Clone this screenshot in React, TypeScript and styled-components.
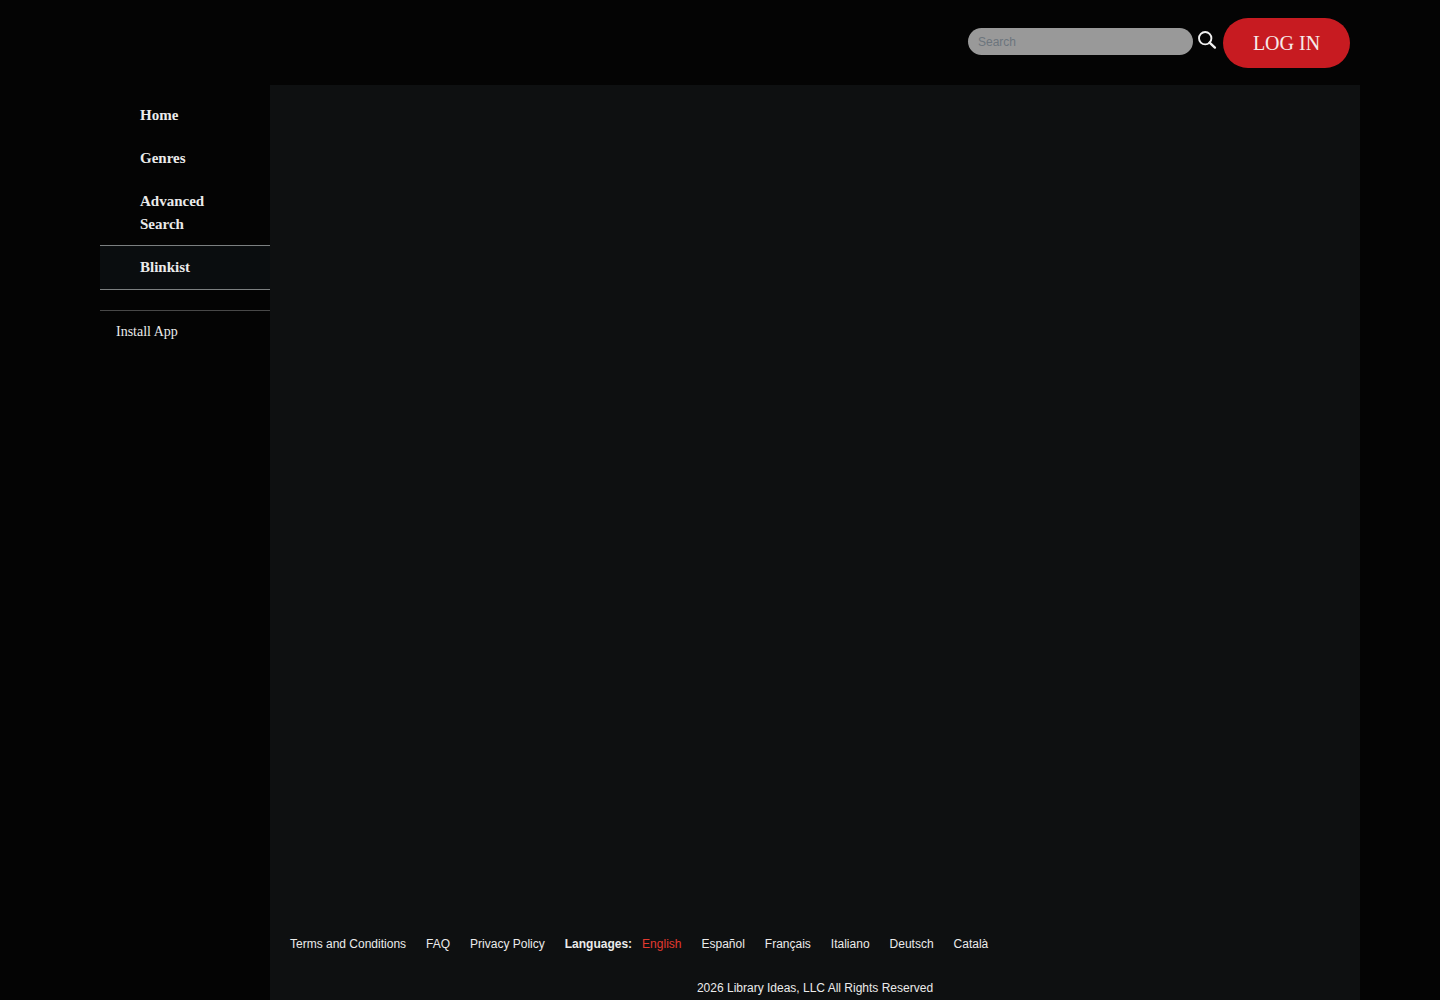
import React from "react";
import styled, { createGlobalStyle } from "styled-components";

const serif = `"Liberation Serif", "Times New Roman", serif`;
const sans = `"Liberation Sans", Arial, sans-serif`;

const GlobalStyle = createGlobalStyle`
  *, *::before, *::after { box-sizing: border-box; }
  body { margin: 0; background: #040404; color: #ebebeb; font-family: ${serif}; }
  a { color: inherit; text-decoration: none; }
  ul { list-style: none; margin: 0; padding: 0; }
`;

const Page = styled.div`
  min-height: 100vh;
  display: flex;
  flex-direction: column;
  padding: 0 80px 0 100px;
`;

const Header = styled.header`
  height: 85px;
  display: flex;
  justify-content: flex-end;
  align-items: flex-start;
  padding: 18px 10px 0;
`;

const SearchForm = styled.form`
  display: flex;
  align-items: flex-start;
  padding-top: 10px;
`;

const SearchInput = styled.input`
  width: 225px;
  height: 27px;
  padding: 0 10px;
  border: 0;
  border-radius: 14px;
  background: #999999;
  color: #111111;
  font: 12px ${sans};
  &::placeholder { color: #6c757d; opacity: 1; }
`;

const SearchButton = styled.button`
  display: flex;
  width: 30px;
  padding: 2px 5px;
  border: 0;
  background: none;
  color: #f0f0f0;
  cursor: pointer;
`;

const LoginButton = styled.button`
  width: 127px;
  height: 50px;
  padding: 0;
  border: 0;
  border-radius: 25px;
  background: #c71b21;
  color: #f6eaea;
  font: 20px ${serif};
  cursor: pointer;
`;

const Body = styled.div`
  flex: 1;
  display: flex;
`;

const Sidebar = styled.aside`
  flex: 0 0 170px;
  padding-top: 9px;
`;

const NavLink = styled.a<{ $active?: boolean }>`
  display: block;
  padding: 10px 40px;
  font-size: 15px;
  font-weight: bold;
  line-height: 23px;
  ${({ $active }) =>
    $active &&
    `
    margin-top: -1px;
    border-top: 1px solid #7b7f80;
    border-bottom: 1px solid #7b7f80;
    background: #0a0d0f;
  `}
`;

const Install = styled.div`
  margin-top: 20px;
  padding: 10px 16px;
  border-top: 1px solid #484848;
  font-size: 14px;
  line-height: 21px;
`;

const Content = styled.div`
  flex: 1;
  min-width: 0;
  display: flex;
  flex-direction: column;
  background: #0e1011;
`;

const Main = styled.main`
  flex: 1;
`;

const Footer = styled.footer`
  padding: 0 20px 3px;
  font: 12px/18px ${sans};
`;

const FooterLinks = styled.div`
  display: flex;
  flex-wrap: wrap;
  gap: 0 20px;
`;

const LinkList = styled.ul`
  display: flex;
  flex-wrap: wrap;
  gap: 0 20px;
`;

const Languages = styled.div`
  display: flex;
  gap: 10px;
`;

const LanguageLink = styled.a<{ $current: boolean }>`
  color: ${({ $current }) => ($current ? "#e23a30" : "inherit")};
`;

const Copyright = styled.p`
  margin: 26px 0 0;
  text-align: center;
`;

const navItems = ["Home", "Genres", "Advanced Search", "Blinkist"];
const legalLinks = ["Terms and Conditions", "FAQ", "Privacy Policy"];
const languages = ["English", "Español", "Français", "Italiano", "Deutsch", "Català"];

export default function App() {
  return (
    <>
      <GlobalStyle />
      <Page>
        <Header>
          <SearchForm role="search" onSubmit={(e) => e.preventDefault()}>
            <SearchInput type="text" placeholder="Search" aria-label="Search" />
            <SearchButton type="submit" aria-label="Submit search">
              <svg width="20" height="20" viewBox="0 0 20 20" fill="none" stroke="currentColor">
                <circle cx="7.2" cy="8.2" r="6.2" strokeWidth="1.9" />
                <path d="M11.6 12.6L16.9 17.6" strokeWidth="2.4" strokeLinecap="round" />
              </svg>
            </SearchButton>
          </SearchForm>
          <LoginButton type="button">LOG IN</LoginButton>
        </Header>
        <Body>
          <Sidebar>
            <nav aria-label="Main">
              <ul>
                {navItems.map((item) => (
                  <li key={item}>
                    <NavLink href="#" $active={item === "Blinkist"}>
                      {item}
                    </NavLink>
                  </li>
                ))}
              </ul>
            </nav>
            <Install>
              <a href="#">Install App</a>
            </Install>
          </Sidebar>
          <Content>
            <Main />
            <Footer>
              <FooterLinks>
                <LinkList>
                  {legalLinks.map((item) => (
                    <li key={item}>
                      <a href="#">{item}</a>
                    </li>
                  ))}
                </LinkList>
                <Languages>
                  <b>Languages:</b>
                  <LinkList>
                    {languages.map((item) => (
                      <li key={item}>
                        <LanguageLink href="#" $current={item === "English"}>
                          {item}
                        </LanguageLink>
                      </li>
                    ))}
                  </LinkList>
                </Languages>
              </FooterLinks>
              <Copyright>2026 Library Ideas, LLC All Rights Reserved</Copyright>
            </Footer>
          </Content>
        </Body>
      </Page>
    </>
  );
}
